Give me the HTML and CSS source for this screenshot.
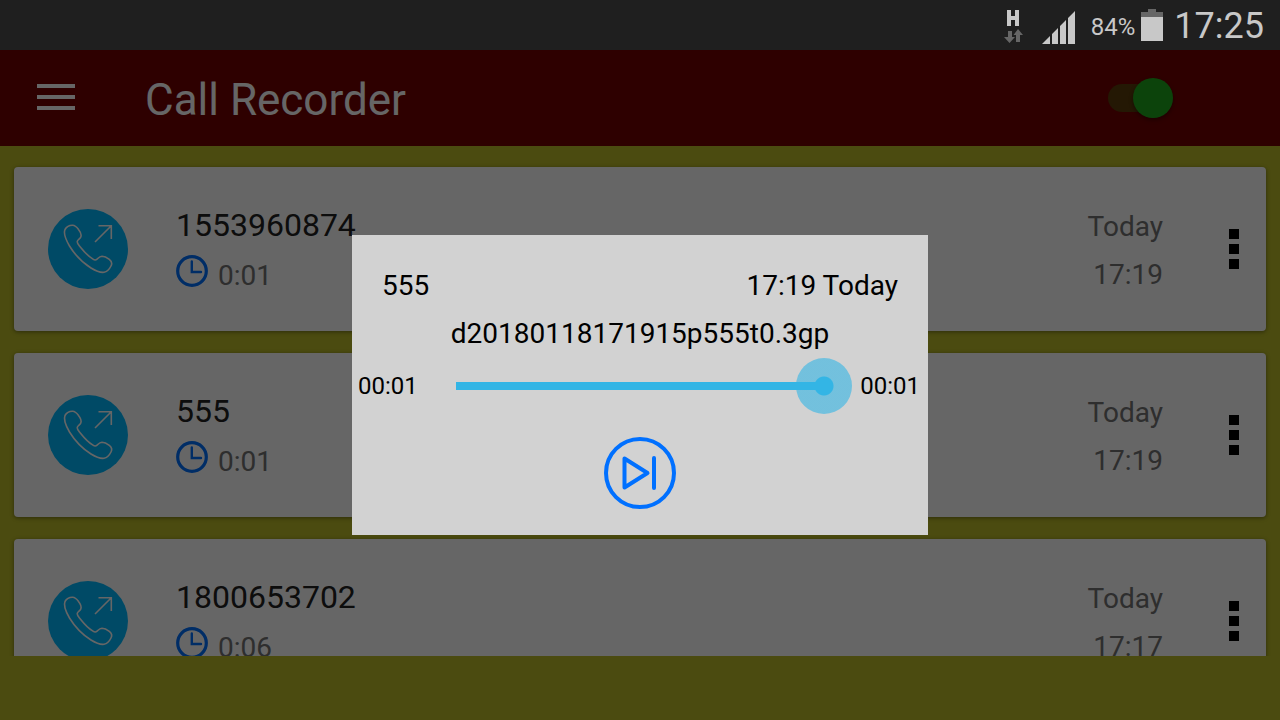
FILE: index.html
```html
<!DOCTYPE html>
<html lang="en">
<head>
    <meta charset="UTF-8">
    <meta name="viewport" content="width=device-width, initial-scale=1.0">
    <title>Call Recorder</title>
    <link rel="stylesheet" href="styles.css">
</head>
<body>
    <!-- shared icons -->
    <svg class="sprite" aria-hidden="true">
        <symbol id="outgoing" viewBox="0 0 80 80">
            <circle cx="40" cy="40" r="40" fill="#00b9ff"/>
            <g fill="none" stroke="#fff" stroke-width="1.6">
                <path d="M17 20.5C18.5 17.8 22 16.2 24.7 16.3C27.500 16.400 29 18.500 30.500 20.500C32.500 23 33.800 25.500 32.800 28C32 30 29.300 30.500 29.200 32.700C29.200 34.500 31 36.200 32.500 38.200C36.500 43.300 40.500 47.300 45 50.200C46.500 51.200 47.800 51.300 49 50.200C50.500 48.800 51.500 47.300 54 47.200C56.500 47.200 59 48.500 61.300 50.300C63.500 52 64.300 54.500 63 57C61.500 60 59 62.800 56 63.300C52 63.800 47.500 61.800 43 59C35 54 27 46 21.500 37C18 31 15 25 17 20.500Z"/>
                <path d="M47 33L63.300 16.700M50.500 16.700H63.300V30"/>
            </g>
        </symbol>
        <symbol id="clock" viewBox="0 0 32 32">
            <g fill="none" stroke="#0070ff">
                <circle cx="16" cy="16" r="14.300" stroke-width="3.200"/>
                <path d="M15.800 6.500V17H25" stroke-width="2.400" stroke-linecap="round"/>
            </g>
        </symbol>
        <symbol id="dots" viewBox="0 0 10 40">
            <path d="M0 0h10v10H0zM0 15h10v10H0zM0 30h10v10H0z"/>
        </symbol>
    </svg>

    <div class="status-bar">
        <svg class="network" viewBox="0 0 20 34" role="img" aria-label="Mobile data">
            <path fill="#c8c8c8" d="M3 0h4v6h4V0h4v16h-4v-6H7v6H3z"/>
            <path fill="#666" d="M4 21h4v6h3l-5.500 6L0 27h4zM12 32h4v-7h3l-5-6-4.500 6H12z"/>
        </svg>
        <svg class="signal" viewBox="0 0 33 33" role="img" aria-label="Signal">
            <path fill="#c8c8c8" d="M0 33l8-8v8zM10 33V23l6-6v16zM18 33V15l6-6v24zM26 33V7l7-7v33z"/>
        </svg>
        <span class="percent">84%</span>
        <svg class="battery" viewBox="0 0 22 32" role="img" aria-label="Battery">
            <path fill="#666" d="M7 0h8v3h7v5H0V3h7z"/>
            <path fill="#c8c8c8" d="M0 8h22v24H0z"/>
        </svg>
        <span class="time">17:25</span>
    </div>

    <div class="screen">
        <header class="app-bar">
            <button class="menu-button" aria-label="Menu">
                <svg viewBox="0 0 38 26"><path fill="#fff" d="M0 0h38v4H0zM0 11h38v4H0zM0 22h38v4H0z"/></svg>
            </button>
            <h1>Call Recorder</h1>
            <input type="checkbox" class="switch" aria-label="Record calls" checked>
        </header>

        <ul class="calls">
            <li class="call">
                <svg class="call-icon"><use href="#outgoing"/></svg>
                <div class="call-info">
                    <div class="number">1553960874</div>
                    <div class="duration"><svg class="clock"><use href="#clock"/></svg><span>0:01</span></div>
                </div>
                <div class="call-date"><div>Today</div><div>17:19</div></div>
                <button class="more" aria-label="More"><svg><use href="#dots"/></svg></button>
            </li>
            <li class="call">
                <svg class="call-icon"><use href="#outgoing"/></svg>
                <div class="call-info">
                    <div class="number">555</div>
                    <div class="duration"><svg class="clock"><use href="#clock"/></svg><span>0:01</span></div>
                </div>
                <div class="call-date"><div>Today</div><div>17:19</div></div>
                <button class="more" aria-label="More"><svg><use href="#dots"/></svg></button>
            </li>
            <li class="call">
                <svg class="call-icon"><use href="#outgoing"/></svg>
                <div class="call-info">
                    <div class="number">1800653702</div>
                    <div class="duration"><svg class="clock"><use href="#clock"/></svg><span>0:06</span></div>
                </div>
                <div class="call-date"><div>Today</div><div>17:17</div></div>
                <button class="more" aria-label="More"><svg><use href="#dots"/></svg></button>
            </li>
        </ul>

        <div class="overlay">
            <div class="player" role="dialog" aria-label="Player">
                <div class="player-top"><span>555</span><span>17:19 Today</span></div>
                <div class="file-name">d20180118171915p555t0.3gp</div>
                <div class="seek">
                    <span>00:01</span>
                    <input type="range" min="0" max="1" value="1" aria-label="Position">
                    <span>00:01</span>
                </div>
                <button class="play" aria-label="Play">
                    <svg viewBox="0 0 72 72" fill="none" stroke="#0070ff" stroke-width="4" stroke-linecap="round" stroke-linejoin="round">
                        <circle cx="36" cy="36" r="34"/>
                        <path d="M20.500 21.500V50.500L43.500 36ZM50 21V51"/>
                    </svg>
                </button>
            </div>
        </div>
    </div>
</body>
</html>
```
FILE: styles.css
```css
* {
    box-sizing: border-box;
}
body {
    margin: 0;
    height: 100vh;
    display: flex;
    flex-direction: column;
    font-family: Roboto, sans-serif;
    background: #bbbb28;
    overflow: hidden;
}
button {
    padding: 0;
    border: none;
    background: none;
    cursor: pointer;
}
svg {
    display: block;
}
.sprite {
    position: absolute;
    width: 0;
    height: 0;
}

/* status bar */
.status-bar {
    display: flex;
    align-items: center;
    justify-content: flex-end;
    height: 50px;
    padding: 2px 16px 0 0;
    background: #1f1f1f;
    color: #c8c8c8;
}
.network {
    width: 20px;
    height: 34px;
    margin-top: 2px;
    margin-right: 18px;
}
.signal {
    width: 33px;
    height: 33px;
    margin-top: 2px;
    margin-right: 16px;
}
.percent {
    font-size: 24px;
    margin-top: 2px;
}
.battery {
    width: 22px;
    height: 32px;
    margin: 0 11px 2px 6px;
}
.time {
    font-size: 36px;
}

.screen {
    flex: 1;
    min-height: 0;
    display: flex;
    flex-direction: column;
    position: relative;
    padding-bottom: 64px;
}

/* app bar */
.app-bar {
    display: flex;
    align-items: center;
    flex-shrink: 0;
    height: 96px;
    padding: 0 112px 0 37px;
    background: #730000;
    color: white;
}
.menu-button {
    padding-bottom: 2px;
}
.menu-button svg {
    width: 38px;
    height: 26px;
}
h1 {
    flex: 1;
    margin: 0;
    padding: 4px 0 0 70px;
    font-size: 44px;
    font-weight: normal;
}
.switch {
    appearance: none;
    position: relative;
    width: 60px;
    height: 28px;
    margin: 0;
    border-radius: 14px;
    background: #5a3c0a;
}
.switch::before {
    content: '';
    position: absolute;
    top: -6px;
    right: -5px;
    width: 40px;
    height: 40px;
    border-radius: 50%;
    background: #20a81c;
    box-shadow: 0 2px 4px rgba(0, 0, 0, 0.4);
}

/* call list */
.calls {
    flex: 1;
    min-height: 0;
    display: flex;
    flex-direction: column;
    gap: 22px;
    margin: 0;
    padding: 21px 14px 0;
    list-style: none;
    overflow: hidden;
}
.call {
    display: flex;
    align-items: center;
    flex-shrink: 0;
    height: 164px;
    padding: 0 27px 0 34px;
    border-radius: 4px;
    background: white;
    box-shadow: 0 1px 4px rgba(0, 0, 0, 0.4);
}
.call-icon {
    width: 80px;
    height: 80px;
}
.call-info {
    flex: 1;
    margin-left: 48px;
}
.number {
    font-size: 32px;
    line-height: 38px;
    color: #212121;
}
.duration {
    display: flex;
    gap: 10px;
    margin-top: 11px;
    font-size: 28px;
    line-height: 32px;
    color: #737373;
}
.duration span {
    padding-top: 5px;
}
.clock {
    width: 32px;
    height: 32px;
}
.call-date {
    margin-right: 66px;
    padding-top: 4px;
    font-size: 28px;
    line-height: 48px;
    text-align: right;
    color: #737373;
}
.more svg {
    width: 10px;
    height: 40px;
}

/* player dialog */
.overlay {
    position: absolute;
    inset: 0;
    display: flex;
    align-items: center;
    justify-content: center;
    background: rgba(0, 0, 0, 0.6);
}
.player {
    width: 45%;
    padding: 27px 0 26px;
    background: #d2d2d2;
    color: black;
    font-size: 28px;
    line-height: 48px;
}
.player-top {
    display: flex;
    justify-content: space-between;
    padding: 0 30px;
}
.file-name {
    text-align: center;
}
.seek {
    display: flex;
    align-items: center;
    padding: 0 8px 0 6px;
    font-size: 24px;
}
.seek input {
    appearance: none;
    flex: 1;
    min-width: 0;
    height: 56px;
    margin: 0 8px 0 38px;
    background: linear-gradient(#33b5e5, #33b5e5) left center / calc(100% - 28px) 8px no-repeat;
}
.seek input::-webkit-slider-thumb {
    appearance: none;
    width: 56px;
    height: 56px;
    border-radius: 50%;
    background: radial-gradient(circle, #33b5e5 9px, rgba(51, 181, 229, 0.6) 10px);
}
.play {
    display: block;
    margin: 23px auto 0;
}
.play svg {
    width: 72px;
    height: 72px;
}
```
